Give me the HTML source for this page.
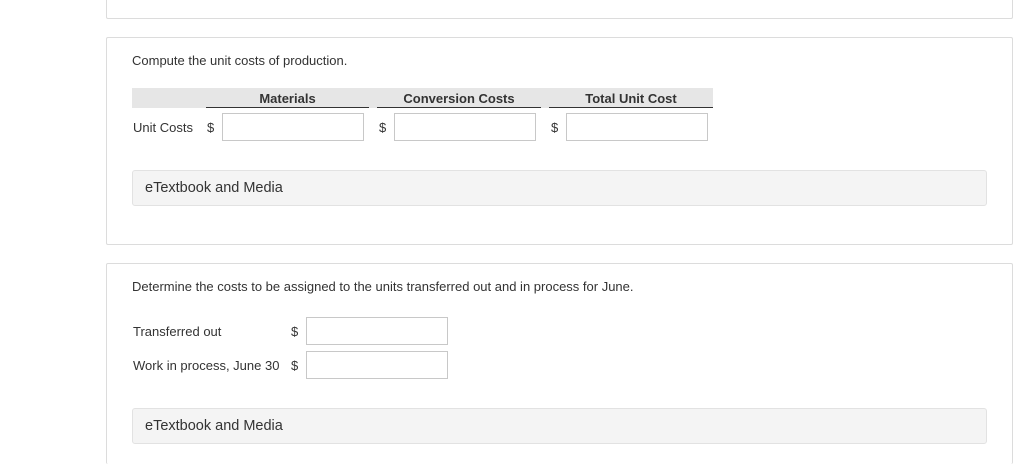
<!DOCTYPE html>
<html style="width:1024px;height:465px;overflow:hidden;margin:0;"><head><style>
body{margin:0;width:1024px;height:465px;background:#fff;position:relative;overflow:hidden;font-family:"Liberation Sans",sans-serif;color:#333;}
.a{position:absolute;}
.panel{position:absolute;left:106px;width:905px;border:1px solid #dcdcdc;border-radius:2px;background:#fff;}
.inp{position:absolute;border:1px solid #c8c8c8;background:#fff;height:26px;}
.bar{position:absolute;left:132px;width:853px;height:34px;background:#f4f4f4;border:1px solid #e2e2e2;border-radius:3px;font-size:14.5px;line-height:34px;text-indent:12px;color:#333;}
.t{position:absolute;font-size:13px;white-space:nowrap;}
.h{position:absolute;font-size:13px;font-weight:bold;text-align:center;border-bottom:1px solid #333;height:19px;line-height:21px;top:88px;}
</style></head><body>
<div class="panel" style="top:-5px;height:22px;"></div>
<div class="panel" style="top:37px;height:206px;"></div>
<div class="panel" style="top:263px;height:200px;border-bottom:none;"></div>

<div class="t" style="left:132px;top:53px;">Compute the unit costs of production.</div>
<div class="a" style="left:132px;top:88px;width:581px;height:20px;background:#e6e6e6;"></div>
<div class="h" style="left:206px;width:163px;">Materials</div>
<div class="h" style="left:377px;width:164px;">Conversion Costs</div>
<div class="h" style="left:549px;width:164px;">Total Unit Cost</div>
<div class="t" style="left:133px;top:120px;">Unit Costs</div>
<div class="t" style="left:207px;top:120px;">$</div>
<div class="inp" style="left:222px;top:113px;width:140px;"></div>
<div class="t" style="left:379px;top:120px;">$</div>
<div class="inp" style="left:394px;top:113px;width:140px;"></div>
<div class="t" style="left:551px;top:120px;">$</div>
<div class="inp" style="left:566px;top:113px;width:140px;"></div>
<div class="bar" style="top:170px;">eTextbook and Media</div>

<div class="t" style="left:132px;top:279px;">Determine the costs to be assigned to the units transferred out and in process for June.</div>
<div class="t" style="left:133px;top:324px;">Transferred out</div>
<div class="t" style="left:291px;top:324px;">$</div>
<div class="inp" style="left:306px;top:317px;width:140px;"></div>
<div class="t" style="left:133px;top:358px;">Work in process, June 30</div>
<div class="t" style="left:291px;top:358px;">$</div>
<div class="inp" style="left:306px;top:351px;width:140px;"></div>
<div class="bar" style="top:408px;">eTextbook and Media</div>
</body></html>
